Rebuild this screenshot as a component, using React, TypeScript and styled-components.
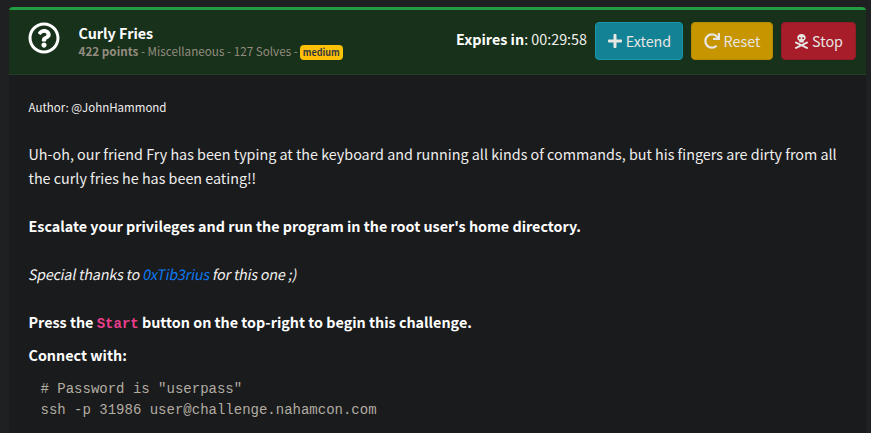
import React from "react";
import styled, { createGlobalStyle } from "styled-components";
import { FaPlus, FaRedo, FaRegQuestionCircle, FaSkullCrossbones } from "react-icons/fa";

const GlobalStyle = createGlobalStyle`
  * { box-sizing: border-box; }
  body {
    margin: 0;
    background: #1f2022;
    color: #f0efed;
    font-family: "Noto Sans CJK SC", "Noto Sans", sans-serif;
    font-size: 14.33px;
    line-height: 24px;
    overflow: hidden;
  }
`;

const Page = styled.main`
  height: 433px;
  padding: 7px 5px 0 9px;
  overflow: hidden;
`;

const Card = styled.section`
  height: 440px;
  background: #1a1b1d;
  border-top: 3px solid #249c41;
  border-radius: 4px;
`;

const Header = styled.header`
  display: flex;
  align-items: flex-start;
  height: 65px;
  padding: 12px 10px 0 19px;
  background: #18311b;
  border-bottom: 1px solid #263c29;
`;

const HelpIcon = styled(FaRegQuestionCircle)`
  width: 32px;
  height: 32px;
  margin-right: 18.5px;
  color: #fff;
`;

const Heading = styled.div`
  flex: 1;
  padding-top: 1px;
`;

const Title = styled.h1`
  margin: 0;
  font-size: 14.33px;
  line-height: 20px;
  font-weight: 700;
  color: #fff;
`;

const Meta = styled.div`
  display: flex;
  align-items: flex-start;
  margin-top: -1px;
  font-size: 11.7px;
  line-height: 17px;
  white-space: pre;
  color: #948c7f;
`;

const Badge = styled.span`
  height: 15px;
  width: 43px;
  margin: 3px 0 0 2px;
  border-radius: 4px;
  background: #ffc107;
  color: #343a40;
  font-size: 9px;
  line-height: 15px;
  font-weight: 700;
  text-align: center;
`;

const Timer = styled.div`
  padding-top: 5px;
  margin-right: 8px;
  white-space: pre;
`;

const Strong = styled.strong`
  font-weight: 700;
  color: #fff;
`;

const Actions = styled.div`
  display: flex;
  gap: 8px;
`;

const Button = styled.button<{ $bg: string; $border: string; $width: number; $gap?: number }>`
  display: flex;
  align-items: center;
  justify-content: center;
  gap: ${(p) => p.$gap ?? 3}px;
  width: ${(p) => p.$width}px;
  height: 38px;
  padding: 0;
  border: 1px solid ${(p) => p.$border};
  border-radius: 4px;
  background: ${(p) => p.$bg};
  color: #e8e6e3;
  font: inherit;
`;

const Body = styled.div`
  padding: 20px 19px 0 19.5px;
`;

const Paragraph = styled.p<{ $gap?: number }>`
  margin: 0 0 ${(p) => p.$gap ?? 24}px;
  white-space: nowrap;
`;

const Author = styled(Paragraph)`
  margin-bottom: 23px;
  font-size: 11.5px;
`;

const Emphasis = styled.em`
  display: inline-block;
  margin-left: -0.7px;
  font-style: normal;
  letter-spacing: -0.2px;
  transform: skewX(-11deg);
  transform-origin: 0 75%;
`;

const Link = styled.a`
  color: #0d78f0;
`;

const Code = styled.code`
  font: 700 14px/21px "Liberation Mono", monospace;
  color: #e83e8c;
`;

const Terminal = styled.pre`
  margin: 0;
  padding-left: 12px;
  font: 14px/21px "Liberation Mono", monospace;
  color: #b2aca2;
`;

export default function App() {
  return (
    <Page>
      <GlobalStyle />
      <Card>
        <Header>
          <HelpIcon />
          <Heading>
            <Title>Curly Fries</Title>
            <Meta>
              <b>422 points</b> - Miscellaneous - 127 Solves -<Badge>medium</Badge>
            </Meta>
          </Heading>
          <Timer>
            <Strong>Expires in</Strong>: 00:29:58
          </Timer>
          <Actions>
            <Button $bg="#138294" $border="#1797ab" $width={88}>
              <FaPlus size={16} />
              Extend
            </Button>
            <Button $bg="#c79500" $border="#b58900" $width={82} $gap={4}>
              <FaRedo size={16} />
              Reset
            </Button>
            <Button $bg="#a71d2a" $border="#921b28" $width={75}>
              <FaSkullCrossbones size={15} />
              Stop
            </Button>
          </Actions>
        </Header>
        <Body>
          <Author>Author: @JohnHammond</Author>
          <Paragraph>
            Uh-oh, our friend Fry has been typing at the keyboard and running all kinds of commands, but his fingers are dirty from all
            <br />
            the curly fries he has been eating!!
          </Paragraph>
          <Paragraph>
            <Strong>Escalate your privileges and run the program in the root user's home directory.</Strong>
          </Paragraph>
          <Paragraph>
            <Emphasis>
              Special thanks to <Link>0xTib3rius</Link> for this one ;)
            </Emphasis>
          </Paragraph>
          <Paragraph $gap={8}>
            <Strong>
              Press the <Code>Start</Code> button on the top-right to begin this challenge.
            </Strong>
          </Paragraph>
          <Paragraph $gap={12}>
            <Strong>Connect with:</Strong>
          </Paragraph>
          <Terminal>{`# Password is "userpass"\nssh -p 31986 user@challenge.nahamcon.com`}</Terminal>
        </Body>
      </Card>
    </Page>
  );
}
